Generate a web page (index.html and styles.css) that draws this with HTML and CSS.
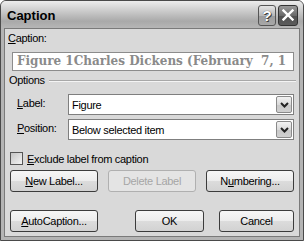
FILE: index.html
```html
<!DOCTYPE html>
<html lang="en">
<head>
    <meta charset="UTF-8">
    <title>Caption</title>
    <link rel="stylesheet" href="styles.css">
</head>
<body>
    <div class="window">
        <div class="titlebar">
            <span class="title">Caption</span>
            <div class="title-buttons">
                <span class="tbtn help">?</span>
                <span class="tbtn close">
                    <svg width="12" height="12" viewBox="0 0 12 12">
                        <path d="M1.5 1.5 L10.5 10.5 M10.5 1.5 L1.5 10.5" stroke="#fff" stroke-width="2.4" stroke-linecap="square"/>
                    </svg>
                </span>
            </div>
        </div>

        <div class="client">
            <div class="field-label"><u>C</u>aption:</div>
            <div class="caption-box">Figure 1Charles Dickens (February&nbsp; 7, 1</div>

            <div class="group-head">
                <span>Options</span>
                <span class="rule"></span>
            </div>

            <div class="opt-row">
                <span class="opt-label"><u>L</u>abel:</span>
                <div class="combo">
                    <span class="combo-text">Figure</span>
                    <span class="drop">
                        <svg width="9" height="6" viewBox="0 0 9 6">
                            <path d="M1 1 L4.5 4.5 L8 1" fill="none" stroke="#222" stroke-width="2"/>
                        </svg>
                    </span>
                </div>
            </div>
            <div class="opt-row">
                <span class="opt-label"><u>P</u>osition:</span>
                <div class="combo">
                    <span class="combo-text">Below selected item</span>
                    <span class="drop">
                        <svg width="9" height="6" viewBox="0 0 9 6">
                            <path d="M1 1 L4.5 4.5 L8 1" fill="none" stroke="#222" stroke-width="2"/>
                        </svg>
                    </span>
                </div>
            </div>

            <div class="check">
                <span class="box"></span>
                <span><u>E</u>xclude label from caption</span>
            </div>

            <div class="btn-row">
                <button class="btn"><u>N</u>ew Label...</button>
                <button class="btn" disabled>Delete Label</button>
                <button class="btn">N<u>u</u>mbering...</button>
            </div>

            <div class="btn-row bottom">
                <button class="btn"><u>A</u>utoCaption...</button>
                <span class="spacer"></span>
                <button class="btn ok">OK</button>
                <button class="btn cancel">Cancel</button>
            </div>
        </div>
    </div>
</body>
</html>
```

FILE: styles.css
```css
:root {
    --client-bg: #d9d9d9;
    --frame: #b4b4b4;
    --text: #000000;
    --edge: #7a7a7a;
}

body {
    margin: 0;
    font-family: 'Liberation Sans', Arial, sans-serif;
    font-size: 11px;
    letter-spacing: -0.3px;
    color: var(--text);
}

.window {
    width: 304px;
    height: 241px;
    box-sizing: border-box;
    border: 1px solid #4a4a4a;
    border-radius: 6px 6px 0 0;
    background: var(--frame);
    display: flex;
    flex-direction: column;
    overflow: hidden;
}

.titlebar {
    height: 27px;
    flex: none;
    display: flex;
    align-items: center;
    justify-content: space-between;
    padding: 0 5px 0 6px;
    background: linear-gradient(#ededed, #c4c4c4 45%, #a9a9a9 75%, #b6b6b6);
}

.title {
    font-weight: bold;
    font-size: 13px;
    letter-spacing: 0;
    padding-top: 2px;
}

.title-buttons {
    display: flex;
    gap: 2px;
    margin-top: 1px;
}

.tbtn {
    height: 21px;
    box-sizing: border-box;
    border: 1px solid #555;
    border-radius: 3px;
    display: flex;
    align-items: center;
    justify-content: center;
}

.help {
    width: 18px;
    background: linear-gradient(#e4e4e4, #b8b8b8 50%, #9c9c9c 51%, #a8a8a8);
    color: #fff;
    font-weight: bold;
    font-size: 15px;
    letter-spacing: 0;
    text-shadow: 0 0 1px #333, 1px 1px 0 #444;
}

.close {
    width: 20px;
    background: linear-gradient(#9a9a9a, #6a6a6a 50%, #505050 51%, #5c5c5c);
    border-color: #333;
}

.client {
    flex: 1;
    margin: 0 3px 3px 3px;
    border: 1px solid var(--edge);
    background: var(--client-bg);
    padding: 3px 5px 0 3px;
    display: flex;
    flex-direction: column;
}

.field-label {
    line-height: 13px;
}

.caption-box {
    margin: 7px 0 0 4px;
    height: 19px;
    box-sizing: border-box;
    border: 1px solid #8c8c8c;
    background: #fff;
    padding: 0 0 0 4px;
    white-space: nowrap;
    overflow: hidden;
    font-family: 'DejaVu Serif', 'Liberation Serif', serif;
    font-weight: bold;
    font-size: 12px;
    letter-spacing: 0;
    line-height: 17px;
    color: #8a8a8a;
}

.group-head {
    display: flex;
    align-items: center;
    gap: 4px;
    margin: 3px 0 0 1px;
    line-height: 13px;
}

.rule {
    flex: 1;
    border-top: 1px solid #a8a8a8;
    border-bottom: 1px solid #f4f4f4;
    margin-right: -2px;
}

.opt-row {
    display: flex;
    align-items: center;
    margin: 7px 0 0 9px;
}

.opt-row + .opt-row {
    margin-top: 4px;
}

.opt-label {
    width: 51px;
    padding-bottom: 3px;
}

.combo {
    flex: 1;
    height: 21px;
    box-sizing: border-box;
    border: 1px solid #7f7f7f;
    background: #fff;
    display: flex;
    align-items: center;
    justify-content: space-between;
    padding: 0 0 0 3px;
}

.drop {
    width: 16px;
    height: 17px;
    margin-right: 1px;
    box-sizing: border-box;
    border: 1px solid #8a8a8a;
    border-radius: 2px;
    background: linear-gradient(#f2f2f2, #dadada 50%, #c8c8c8 51%, #d0d0d0);
    display: flex;
    align-items: center;
    justify-content: center;
}

.check {
    display: flex;
    align-items: center;
    gap: 4px;
    margin: 12px 0 0 2px;
}

.box {
    width: 13px;
    height: 13px;
    box-sizing: border-box;
    border: 1px solid #555;
    background: linear-gradient(135deg, #c4c4c4, #f4f4f4);
}

.btn-row {
    display: flex;
    gap: 10px;
    margin: 5px 0 0 2px;
}

.btn-row.bottom {
    margin-top: 18px;
    gap: 0;
}

.spacer {
    flex: 1;
}

.btn {
    width: 88px;
    height: 22px;
    padding: 0;
    font-family: inherit;
    font-size: 11px;
    letter-spacing: -0.3px;
    color: #000;
    border: 1px solid #3c3c3c;
    border-radius: 3px;
    background: linear-gradient(#f6f6f6, #ececec 50%, #dcdcdc 51%, #d2d2d2);
}

.btn:disabled {
    border-color: #b0b0b0;
    background: #e4e4e4;
    color: #a6a6a6;
}

.btn.ok {
    width: 69px;
    margin-right: 15px;
}

.btn.cancel {
    width: 75px;
}
```
